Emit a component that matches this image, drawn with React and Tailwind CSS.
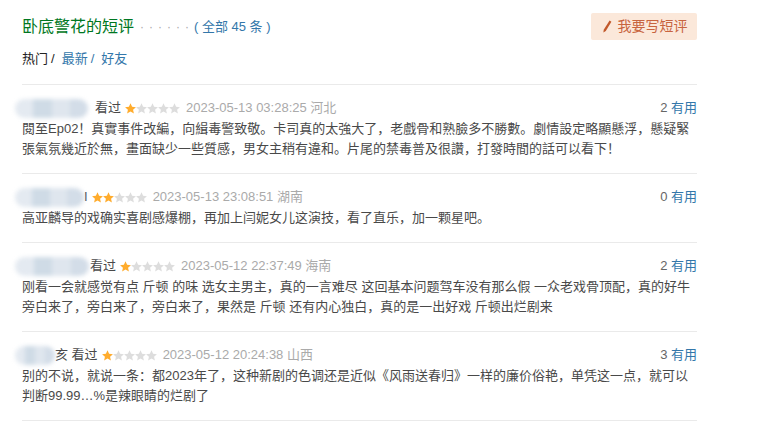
import React from 'react';

const font = { fontFamily: '"Liberation Sans", "Noto Sans CJK SC", sans-serif' };

function Star({ on }) {
  return (
    <svg width="11" height="11" viewBox="0 0 24 23" className="shrink-0">
      <path
        d="M12 0l3.5 7.6 8.3.9-6.2 5.6 1.8 8.2L12 18.1l-7.4 4.2 1.8-8.2L.2 8.5l8.3-.9z"
        fill={on ? '#ffac2d' : '#dddddd'}
      />
    </svg>
  );
}

function Stars({ n }) {
  return (
    <span className="flex items-center">
      {[0, 1, 2, 3, 4].map((i) => (
        <Star key={i} on={i < n} />
      ))}
    </span>
  );
}

function Blur({ w }) {
  return (
    <span className="relative inline-block h-[20px] shrink-0" style={{ width: w }}>
      <span className="absolute inset-x-0 top-[1px] bottom-0 flex overflow-hidden rounded-full blur-[2px]">
        <span className="flex-1 bg-[#e4eaf1]" />
        <span className="flex-1 bg-[#cfdbe6]" />
        <span className="flex-1 bg-[#dfe6ee]" />
        <span className="flex-1 bg-[#d3dde8]" />
      </span>
    </span>
  );
}

const reviews = [
  {
    blur: 73,
    tail: '看过',
    tailGap: 'ml-[7px]',
    stars: 1,
    time: '2023-05-13 03:28:25',
    loc: '河北',
    votes: 2,
    lines: [
      '閱至Ep02！真實事件改編，向緝毒警致敬。卡司真的太強大了，老戲骨和熟臉多不勝數。劇情設定略顯懸浮，懸疑緊',
      '張氣氛幾近於無，畫面缺少一些質感，男女主稍有違和。片尾的禁毒普及很讚，打發時間的話可以看下！',
    ],
  },
  {
    blur: 69,
    tail: 'I',
    tailGap: 'ml-0',
    stars: 2,
    time: '2023-05-13 23:08:51',
    loc: '湖南',
    votes: 0,
    lines: ['高亚麟导的戏确实喜剧感爆棚，再加上闫妮女儿这演技，看了直乐，加一颗星吧。'],
  },
  {
    blur: 74,
    tail: '看过',
    tailGap: 'ml-[1px]',
    stars: 1,
    time: '2023-05-12 22:37:49',
    loc: '海南',
    votes: 2,
    lines: [
      '刚看一会就感觉有点 斤顿 的味 选女主男主，真的一言难尽 这回基本问题驾车没有那么假 一众老戏骨顶配，真的好牛',
      '旁白来了，旁白来了，旁白来了，果然是 斤顿 还有内心独白，真的是一出好戏 斤顿出烂剧来',
    ],
  },
  {
    blur: 40,
    tail: '亥 看过',
    tailGap: 'ml-0',
    stars: 1,
    time: '2023-05-12 20:24:38',
    loc: '山西',
    votes: 3,
    lines: [
      '别的不说，就说一条：都2023年了，这种新剧的色调还是近似《风雨送春归》一样的廉价俗艳，单凭这一点，就可以',
      '判断99.99…%是辣眼睛的烂剧了',
    ],
  },
];

export default function App() {
  return (
    <div className="h-[429px] w-[774px] overflow-hidden bg-white" style={font}>
      <div className="ml-[22px] w-[675px]">
        <div className="flex h-[50px] items-start pt-[13px]">
          <div className="flex h-[27px] flex-1 items-center">
            <span className="text-[16px] leading-[20px] text-[#007722]">卧底警花的短评</span>
            <span className="ml-[6px] text-[12px] tracking-[5px] text-[#aaaaaa]">······</span>
            <span className="text-[13px] text-[#3377aa]">( 全部 45 条 )</span>
          </div>
          <button className="flex h-[27px] w-[106px] items-center justify-center gap-[6px] rounded-[2px] bg-[#fbe8da] text-[14px] text-[#c8643f]">
            <svg width="11" height="13" viewBox="0 0 11 13">
              <path d="M8.6 0.6l1.8 1.1-5.6 9.3-2.4 1.6 0.3-2.8z" fill="#c2582a" />
            </svg>
            我要写短评
          </button>
        </div>
        <div className="flex h-[34px] items-start text-[13px] leading-[18px]">
          <span className="text-[#222222]">热门</span>
          <span className="ml-[3px] text-[#222222]">/</span>
          <span className="ml-[7px] text-[#3377aa]">最新</span>
          <span className="ml-[3px] text-[#3377aa]">/</span>
          <span className="ml-[7px] text-[#3377aa]">好友</span>
        </div>
        {reviews.map((r, i) => (
          <div key={i} className="border-t border-[#eaeaea] pt-[12px] pb-[14px]">
            <div className="flex h-[22px] items-center text-[13px]">
              <span className="-ml-[7px] flex items-center">
                <Blur w={r.blur} />
              </span>
              <span className={`${r.tailGap} text-[#494949]`}>{r.tail}</span>
              <span className="ml-[4px]">
                <Stars n={r.stars} />
              </span>
              <span className="ml-[6px] text-[#aaaaaa]">{r.time} {r.loc}</span>
              <span className="ml-auto">
                <span className="text-[#666666]">{r.votes} </span>
                <span className="text-[#3377aa]">有用</span>
              </span>
            </div>
            {r.lines.map((line, j) => (
              <p key={j} className="whitespace-nowrap text-[13px] leading-[20px] text-[#494949]">
                {line}
              </p>
            ))}
          </div>
        ))}
        <div className="border-t border-[#eaeaea]" />
      </div>
    </div>
  );
}
